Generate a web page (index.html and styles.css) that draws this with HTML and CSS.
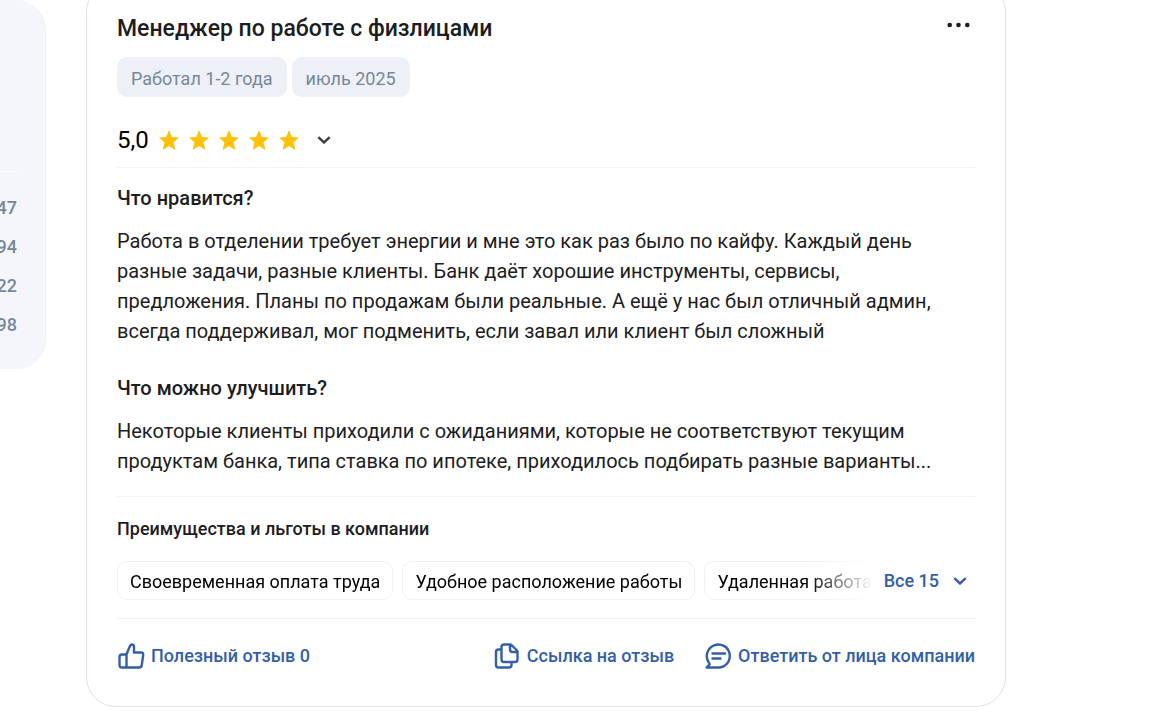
FILE: index.html
```html
<!DOCTYPE html>
<html lang="ru">
<head>
<meta charset="utf-8">
<meta name="viewport" content="width=device-width, initial-scale=1">
<title>Отзыв: Менеджер по работе с физлицами</title>
<link rel="stylesheet" href="styles.css">
</head>
<body>
<svg class="sprite" aria-hidden="true">
  <symbol id="star" viewBox="0 0 20 20"><path d="M10 0l2.900 6.900 7.100.6-5.400 4.800 1.700 7.700L10 16l-6.300 4 1.700-7.700L0 7.500l7.100-.6z"/></symbol>
  <symbol id="chevron" viewBox="0 0 14 8"><path d="M1.300 1.200L7 6.500l5.700-5.300" fill="none" stroke="currentColor" stroke-width="2.400"/></symbol>
</svg>
<div class="page">
  <aside class="sidebar">
    <ul class="counts">
      <li>47</li>
      <li>94</li>
      <li>22</li>
      <li>98</li>
    </ul>
  </aside>
  <main class="main">
    <article class="review">
      <header class="review-head">
        <h1 class="title">Менеджер по работе с физлицами</h1>
        <button class="more" type="button" aria-label="Ещё">
          <svg width="24" height="6" viewBox="0 0 24 6" fill="currentColor"><circle cx="2.700" cy="3" r="2.300"/><circle cx="11.500" cy="3" r="2.300"/><circle cx="20.300" cy="3" r="2.300"/></svg>
        </button>
      </header>
      <div class="chips">
        <span class="chip">Работал 1-2 года</span>
        <span class="chip">июль 2025</span>
      </div>
      <button class="rating" type="button" aria-label="Оценка 5,0">
        <span class="score">5,0</span>
        <span class="stars">
          <svg class="star"><use href="#star"/></svg>
          <svg class="star"><use href="#star"/></svg>
          <svg class="star"><use href="#star"/></svg>
          <svg class="star"><use href="#star"/></svg>
          <svg class="star"><use href="#star"/></svg>
        </span>
        <svg class="chevron"><use href="#chevron"/></svg>
      </button>
      <section class="texts">
        <h2 class="question">Что нравится?</h2>
        <p class="answer">Работа в отделении требует энергии и мне это как раз было по кайфу. Каждый день разные задачи, разные клиенты. Банк даёт хорошие инструменты, сервисы, предложения. Планы по продажам были реальные. А ещё у нас был отличный админ, всегда поддерживал, мог подменить, если завал или клиент был сложный</p>
        <h2 class="question">Что можно улучшить?</h2>
        <p class="answer">Некоторые клиенты приходили с ожиданиями, которые не соответствуют текущим продуктам банка, типа ставка по ипотеке, приходилось подбирать разные варианты...</p>
      </section>
      <section class="benefits">
        <h2 class="benefits-title">Преимущества и льготы в компании</h2>
        <div class="benefits-row">
          <div class="tags">
            <span class="tag">Своевременная оплата труда</span>
            <span class="tag">Удобное расположение работы</span>
            <span class="tag">Удаленная работа</span>
          </div>
          <button class="all" type="button">Все 15 <svg class="chevron"><use href="#chevron"/></svg></button>
        </div>
      </section>
      <footer class="actions">
        <button class="action useful" type="button">
          <svg class="icon" viewBox="0 0 28 28"><path d="M9.500 12.500V25.500M5 12.500H9.500L12.300 5.500Q13.400 2.500 15 2.500Q17 2.500 17 5V10.500H24Q26.500 10.500 26.200 13L24.800 23Q24.500 25.500 22 25.500H5Q2.500 25.500 2.500 23V15Q2.500 12.500 5 12.500"/></svg>
          Полезный отзыв 0
        </button>
        <button class="action" type="button">
          <svg class="icon" viewBox="0 0 28 28"><path d="M10.500 2.500H18L24.500 9V17.500Q24.500 20 22 20H11Q8.500 20 8.500 17.500V5Q8.500 2.500 11 2.500M17 3V7.500Q17 10 19.500 10H24M8.500 7.500H5.500Q3 7.500 3 10V23Q3 25.500 5.500 25.500H16Q18.500 25.500 18.500 23V20.500"/></svg>
          Ссылка на отзыв
        </button>
        <button class="action" type="button">
          <svg class="icon" viewBox="0 0 28 28"><path d="M2.500 25.500H14.500A11.500 11.500 0 1 0 4.500 20L5.700 22.300Z"/><path d="M8.500 11.500H21M8.500 16.500H16.500" stroke-linecap="round"/></svg>
          Ответить от лица компании
        </button>
      </footer>
    </article>
  </main>
</div>
</body>
</html>
```

FILE: styles.css
```css
* { box-sizing: border-box; }
body {
  margin: 0;
  background: #fff;
  color: #1d1d1f;
  font: 400 20px/30px Roboto, "Noto Sans", sans-serif;
}
h1, h2, p, ul { margin: 0; padding: 0; }
button {
  padding: 0;
  border: 0;
  background: none;
  color: inherit;
  font: inherit;
  cursor: pointer;
}
svg { display: block; flex: none; }
.sprite { position: absolute; width: 0; height: 0; }
.page { display: flex; align-items: flex-start; gap: 40px; }

.sidebar {
  flex: none;
  width: 46px;
  padding: 171px 28px 29px 0;
  border-right: 1px solid #eeeff1;
  border-radius: 0 30px 30px 0;
  background: #f5f6fc;
}
.counts {
  display: flex;
  flex-direction: column;
  align-items: flex-end;
  gap: 9px;
  padding-top: 21px;
  border-top: 1px solid #fff;
  list-style: none;
  color: #788797;
  font-size: 18px;
  font-weight: 500;
}

.main { flex: 1; min-width: 0; padding-right: 150px; }
.review {
  margin-top: -18px;
  padding: 30px;
  border: 1px solid #dbe1ea;
  border-radius: 30px;
}
.review-head { display: flex; justify-content: space-between; align-items: flex-start; }
.title { padding-top: 1px; font-size: 23px; font-weight: 500; line-height: 30px; }
.more { padding: 9px 4px; }
.chips { display: flex; gap: 5px; margin-top: 13px; }
.chip {
  padding: 7px 14px 3px;
  border-radius: 10px;
  background: #eef0f8;
  color: #788797;
  font-size: 18px;
}
.rating { display: flex; align-items: center; margin: 28px 0 12px; }
.score { margin-right: 10px; font-size: 24px; color: #000; }
.stars { display: flex; gap: 10px; }
.star { width: 20px; height: 20px; fill: #ffc107; }
.chevron { width: 14px; height: 8px; }
.rating .chevron { margin-left: 18px; color: #404040; }

.texts {
  padding: 15px 0 20px;
  border-top: 1px solid #f3f3f6;
  border-bottom: 1px solid #f3f3f6;
}
.question { margin-bottom: 13px; font-size: 20px; font-weight: 500; }
.answer + .question { margin-top: 27px; }

.benefits { padding: 17px 0 18px; border-bottom: 1px solid #f0f1f7; }
.benefits-title { font-size: 18px; font-weight: 500; }
.benefits-row { display: flex; align-items: center; margin-top: 17px; }
.tags {
  display: flex;
  flex: 1;
  gap: 9px;
  min-width: 0;
  overflow: hidden;
  mask-image: linear-gradient(to right, #000 calc(100% - 65px), transparent);
}
.tag {
  flex: none;
  padding: 5px 12px 2px;
  border: 1px solid #eef0f8;
  border-radius: 10px;
  color: #000;
  font-size: 18px;
}
.all {
  display: flex;
  align-items: center;
  gap: 14px;
  padding: 1px 8px 0 11px;
  color: #335fa7;
  font-size: 18px;
  font-weight: 500;
}

.actions {
  display: flex;
  gap: 30px;
  padding-top: 22px;
  padding-bottom: 5px;
}
.action {
  display: flex;
  align-items: center;
  gap: 6px;
  color: #335fa7;
  font-size: 18px;
  font-weight: 500;
}
.useful { margin-right: auto; }
.icon {
  width: 28px;
  height: 28px;
  fill: none;
  stroke: currentColor;
  stroke-width: 2.4;
  stroke-linejoin: round;
}
```
